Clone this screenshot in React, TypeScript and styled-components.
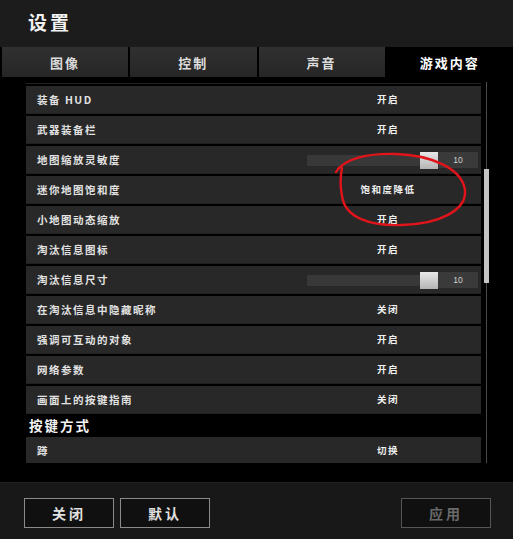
import React, { useLayoutEffect, useRef } from "react";
import styled, { createGlobalStyle } from "styled-components";

const GlobalStyle = createGlobalStyle`
  html, body {
    margin: 0;
    padding: 0;
    background: #000;
  }
  body {
    font-family: "Noto Sans CJK SC", "Noto Sans", "Liberation Sans", sans-serif;
    color: #e6e6e6;
  }
`;

/*
lv 0 page -> header, tabs, content, footer
*/
const Page = styled.div`
    position: relative;
    display: flex;
    flex-direction: column;
    width: 513px;
    height: 539px;
    background: #000;
    overflow: hidden;
`;

const Header = styled.header`
    display: flex;
    align-items: center;
    height: 47px;
    padding: 0 0 5px 28px;
    box-sizing: border-box;
    background: #1c1c1c;
    color: #f2f2f2;
    font-size: 19px;
    font-weight: 700;
    line-height: 1;
    letter-spacing: 3px;
`;

const TabBar = styled.nav`
    display: flex;
    gap: 2px;
    height: 30px;
    padding-left: 2px;
    background: #000;
`;

const Tab = styled.div<{ $active?: boolean }>`
    flex: 1;
    display: flex;
    justify-content: center;
    align-items: center;
    background: ${(p) => (p.$active ? "#000" : "linear-gradient(#303030, #262626)")};
    color: ${(p) => (p.$active ? "#fff" : "#dcdcdc")};
    font-size: 13px;
    font-weight: 700;
    line-height: 1;
    letter-spacing: 2px;
`;

/*
lv 1 content -> viewport(list), scroll track
*/
const Content = styled.section`
    display: flex;
    flex-direction: row;
    height: 405px;
    padding: 6px 0 0 26px;
    box-sizing: border-box;
    border-left: 3px solid #0b0b0b;
    margin-left: -3px;
`;

const Viewport = styled.div`
    width: 455px;
    height: 380px;
    overflow: hidden;
`;

const List = styled.div`
    display: flex;
    flex-direction: column;
    gap: 2px;
`;

const Row = styled.div`
    display: grid;
    grid-template-columns: 1fr 186px;
    align-items: center;
    height: 28px;
    background: #282828;
    box-shadow: inset 0 -1px 0 #202020;
`;

const Label = styled.span`
    padding-left: 11px;
    color: #e2e2e2;
    font-size: 10.5px;
    font-weight: 700;
    line-height: 1;
    letter-spacing: 1.5px;
`;

const Value = styled.span`
    text-align: center;
    color: #f0f0f0;
    font-size: 9.5px;
    font-weight: 700;
    line-height: 1;
    letter-spacing: 1.5px;
`;

const Heading = styled.h3`
    margin: 0;
    height: 19px;
    padding-left: 3px;
    display: flex;
    align-items: center;
    color: #f4f4f4;
    font-size: 13.5px;
    font-weight: 700;
    line-height: 1;
    letter-spacing: 2px;
    background: #000;
`;

// slider in value column
const Slider = styled.div`
    display: flex;
    align-items: center;
    height: 17px;
    margin: 0 3px 0 12px;
`;

const Track = styled.div`
    flex: 1;
    height: 11px;
    background: #383838;
`;

const Thumb = styled.div`
    width: 18px;
    height: 17px;
    background: linear-gradient(#e8e8e8, #b4b4b4);
`;

const SliderValue = styled.div`
    display: flex;
    justify-content: center;
    align-items: center;
    width: 40px;
    height: 16px;
    background: #3a3a3a;
    color: #cfcfcf;
    font-family: "Liberation Sans", sans-serif;
    font-size: 8.5px;
    line-height: 1;
`;

const ScrollTrack = styled.div`
    width: 5px;
    height: 381px;
    margin: -1px 0 0 3px;
    padding-top: 87px;
    box-sizing: border-box;
    background: linear-gradient(90deg, transparent 2px, #4a4a4a 2px, #4a4a4a 3px, transparent 3px);
`;

const ScrollThumb = styled.div`
    width: 5px;
    height: 114px;
    background: #c4c4c4;
`;

/*
lv 1 footer -> buttons
*/
const Footer = styled.footer`
    display: flex;
    align-items: flex-start;
    flex: 1;
    padding: 15px 22px 0 24px;
    gap: 6px;
    background: #181818;
    border-top: 1px solid #202020;
`;

const Button = styled.button<{ $disabled?: boolean }>`
    width: 90px;
    height: 30px;
    padding: 0;
    background: #101010;
    border: 1px solid ${(p) => (p.$disabled ? "#555" : "#8a8a8a")};
    color: ${(p) => (p.$disabled ? "#6a6a6a" : "#e0e0e0")};
    font-family: "Noto Sans CJK SC", sans-serif;
    font-size: 14px;
    font-weight: 700;
    line-height: 1;
    letter-spacing: 3px;
    &:last-child {
        margin-left: auto;
    }
`;

// red annotation drawn over the list
const Annotation = styled.svg`
    position: absolute;
    left: 330px;
    top: 148px;
    width: 145px;
    height: 84px;
    pointer-events: none;
`;

type Item = { label: string; value?: string; slider?: number };

const itemsTop: Item[] = [
    { label: "装备 HUD", value: "开启" },
    { label: "武器装备栏", value: "开启" },
    { label: "地图缩放灵敏度", slider: 10 },
    { label: "迷你地图饱和度", value: "饱和度降低" },
    { label: "小地图动态缩放", value: "开启" },
    { label: "淘汰信息图标", value: "开启" },
    { label: "淘汰信息尺寸", slider: 10 },
    { label: "在淘汰信息中隐藏昵称", value: "关闭" },
    { label: "强调可互动的对象", value: "开启" },
    { label: "网络参数", value: "开启" },
    { label: "画面上的按键指南", value: "关闭" },
];

const itemsKeys: Item[] = [{ label: "蹲", value: "切换" }];

const tabs = ["图像", "控制", "声音", "游戏内容"];

function SettingRow({ item }: { item: Item }) {
    return (
        <Row>
            <Label>{item.label}</Label>
            {item.slider !== undefined ? (
                <Slider>
                    <Track />
                    <Thumb />
                    <SliderValue>{item.slider}</SliderValue>
                </Slider>
            ) : (
                <Value>{item.value}</Value>
            )}
        </Row>
    );
}

export default function App() {
    const viewRef = useRef<HTMLDivElement>(null);

    // list is scrolled a little: only the bottom edge of the row above shows
    useLayoutEffect(() => {
        if (viewRef.current) viewRef.current.scrollTop = 27;
    }, []);

    return (
        <Page>
            <GlobalStyle />
            <Header>设置</Header>
            <TabBar>
                {tabs.map((t, i) => (
                    <Tab key={t} $active={i === 3}>
                        {t}
                    </Tab>
                ))}
            </TabBar>
            <Content>
                <Viewport ref={viewRef}>
                    <List>
                        <Row />
                        {itemsTop.map((it) => (
                            <SettingRow key={it.label} item={it} />
                        ))}
                        <Heading>按键方式</Heading>
                        {itemsKeys.map((it) => (
                            <SettingRow key={it.label} item={it} />
                        ))}
                        <Row />
                    </List>
                </Viewport>
                <ScrollTrack>
                    <ScrollThumb />
                </ScrollTrack>
            </Content>
            <Footer>
                <Button>关闭</Button>
                <Button>默认</Button>
                <Button $disabled>应用</Button>
            </Footer>
            <Annotation viewBox="0 0 145 84">
                <path
                    d="M6 24 C14 10, 40 5, 66 6 C100 7, 132 20, 135 42 C137 62, 110 76, 72 77 C40 78, 15 70, 12 48 C10 38, 10 30, 12 20"
                    fill="none"
                    stroke="#e0141a"
                    strokeWidth="2.4"
                    strokeLinecap="round"
                />
            </Annotation>
        </Page>
    );
}
